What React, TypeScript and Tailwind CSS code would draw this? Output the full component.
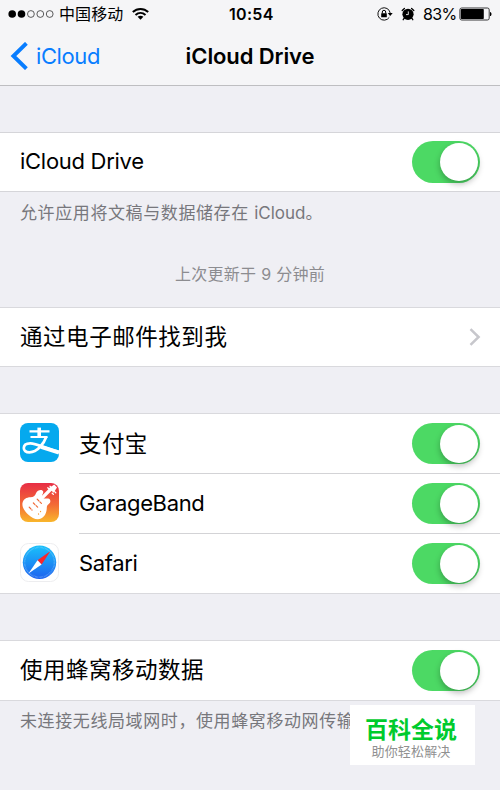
import type { ReactNode } from "react";

const cjk = "font-['Inter','Noto_Sans_CJK_SC',sans-serif]";

function Switch() {
  return (
    <div className="flex h-[41.5px] w-[68px] shrink-0 items-center justify-end rounded-full bg-[#4cd964] pr-[2px]">
      <div className="size-[38px] rounded-full bg-white shadow-[0_3px_6px_rgba(0,0,0,0.28)]" />
    </div>
  );
}

function AlipayIcon() {
  return (
    <svg viewBox="0 0 39 39" className="size-[39px] shrink-0">
      <rect width="39" height="39" rx="8" fill="#05a9ee" />
      <g fill="none" stroke="#fff">
        <path d="M9.5 8.4H29.5M10.5 14H27.5" strokeWidth="2.1" />
        <path d="M19.2 4.6V14" strokeWidth="3.6" />
        <path d="M26.4 13.5C24 20.5 17.5 29.3 9.5 29.3C5.7 29.3 3.8 27.5 3.8 25C3.8 22 6.4 20.3 10.3 20.3C16 20.3 24 24.4 39 29" strokeWidth="2.7" />
        <path d="M21 23.9L39 29.6" strokeWidth="3.8" />
      </g>
    </svg>
  );
}

function GarageBandIcon() {
  return (
    <svg viewBox="0 0 39 39" className="size-[39px] shrink-0">
      <defs>
        <linearGradient id="gb" x1="0" y1="0" x2="0" y2="1">
          <stop stopColor="#e82d45" />
          <stop offset=".55" stopColor="#f36a36" />
          <stop offset="1" stopColor="#f9b62b" />
        </linearGradient>
      </defs>
      <rect width="39" height="39" rx="8" fill="url(#gb)" />
      <path d="M21 16L31.5 5.5" stroke="#fff" strokeWidth="3.2" />
      <path d="M28.8 5.2L34.2 1.5L37 4.4L33.6 9.8Z" fill="#fff" />
      <path d="M30 3.2L31.2 4.4M27.8 4.8L29 6M34.6 8.6L35.8 9.8M32.2 10.2L33.4 11.4" stroke="#fff" strokeWidth="1.3" strokeLinecap="round" />
      <path d="M16 10.2C17.5 6.5 22.6 6 23.2 8.6C23.6 10.6 21.3 12.4 22 14.4C23 17.2 29.2 13.8 30.2 17.2C31.2 20.8 26.8 20.8 26.8 24.6C26.7 29.5 24.8 33.8 21 35.6C17 37.4 12.2 35.4 8.4 31.8C4.6 28.2 1.8 24 2.5 20C3.2 16 6.5 14.3 10.4 14.2C13.6 14.1 15 12.9 16 10.2Z" fill="#fff" />
      <path d="M17.2 16.2L21.4 20.4M13.4 20L17.6 24.2M9.2 24.2L12 27" stroke="#f16b38" strokeWidth="1.2" strokeLinecap="round" strokeDasharray="2.2 1.6" />
      <path d="M20.5 28.5L20.6 28.6M18.5 31L18.6 31.1" stroke="#f49a34" strokeWidth="1.2" strokeLinecap="round" />
    </svg>
  );
}

function SafariIcon() {
  return (
    <svg viewBox="0 0 39 39" className="size-[39px] shrink-0">
      <defs>
        <linearGradient id="sf" x1="0" y1="0" x2="0" y2="1">
          <stop stopColor="#19c1fb" />
          <stop offset="1" stopColor="#1e62ef" />
        </linearGradient>
      </defs>
      <rect x=".5" y=".5" width="38" height="38" rx="8" fill="#fff" stroke="#ededef" />
      <circle cx="19.5" cy="19.3" r="16.7" fill="url(#sf)" />
      <circle cx="19.5" cy="19.3" r="14.9" fill="none" stroke="#a8dcff" strokeWidth="1.6" strokeDasharray=".5 .8" opacity=".55" />
      <path d="M30.5 8L17.5 17.2L21.6 21.4Z" fill="#fb2529" />
      <path d="M17.5 17.2L21.6 21.4L8.5 30.5Z" fill="#fff" />
    </svg>
  );
}

function Status() {
  return (
    <div className="flex h-[28px] items-center pl-[8px] pr-[6px] text-black">
      <svg viewBox="0 0 46 10" className="h-[10px] w-[46px]">
        <circle cx="4.2" cy="5" r="3.8" />
        <circle cx="13.5" cy="5" r="3.8" />
        <g fill="none" stroke="#333" strokeWidth=".8">
          <circle cx="22.9" cy="5" r="3.4" />
          <circle cx="32.3" cy="5" r="3.4" />
          <circle cx="41.7" cy="5" r="3.4" />
        </g>
      </svg>
      <span className="ml-[5px] w-[65px] whitespace-nowrap text-[16px] leading-[26px] tracking-[0.1px]">中国移动</span>
      <svg viewBox="0 0 17 12" className="ml-[8px] h-[12px] w-[17px]">
        <g fill="none" stroke="#000" strokeWidth="2">
          <path d="M.8 4.1C5.2 0 11.8 0 16.2 4.1" />
          <path d="M3.5 7C6.5 4.3 10.5 4.3 13.5 7" />
        </g>
        <path d="M5.6 8.8C7.3 7.4 9.7 7.4 11.4 8.8L8.5 11.8Z" />
      </svg>
      <span className="ml-[80px] w-[46px] whitespace-nowrap text-[16px] font-semibold leading-[26px] tracking-[0.3px]">10:54</span>
      <svg viewBox="0 0 16 14" className="ml-[102px] h-[14px] w-[16px]">
        <path d="M13.2 6A6.2 6.2 0 1 0 12.3 10.3" fill="none" stroke="#111" strokeWidth="1" />
        <path d="M10.8 6H15.7L13.2 9Z" />
        <rect x="4.2" y="6.3" width="5.6" height="4" rx=".5" />
        <path d="M5.3 6.5V5A1.7 1.7 0 0 1 8.7 5V6.5" fill="none" stroke="#000" strokeWidth="1" />
      </svg>
      <svg viewBox="0 0 14 14" className="ml-[8px] h-[14px] w-[14px]">
        <circle cx="7" cy="7.3" r="5.6" />
        <path d="M1.2 3.5L3.4 1.5M10.6 1.5L12.8 3.5M3.2 11.2L2.2 12.7M10.8 11.2L11.8 12.7" stroke="#000" strokeWidth="1.3" strokeLinecap="round" />
        <path d="M7.3 4.4V7.6H5" fill="none" stroke="#f5f5f7" strokeWidth=".9" />
      </svg>
      <span className="ml-[8px] w-[33px] whitespace-nowrap text-[16px] leading-[26px] tracking-[-0.7px]">83%</span>
      <svg viewBox="0 0 33 14" className="ml-[3px] h-[14px] w-[33px] shrink-0">
        <rect x=".9" y="1" width="29.3" height="12" rx="1.8" fill="none" stroke="#222" strokeWidth=".9" />
        <rect x="1.8" y="2" width="23" height="10" rx=".7" />
        <path d="M31 4.9C33 5.4 33 8.6 31 9.1Z" />
      </svg>
    </div>
  );
}

function AppRow({ icon, name, last }: { icon: ReactNode; name: ReactNode; last?: boolean }) {
  return (
    <div className={`flex pl-[20px] ${last ? "h-[59px]" : "h-[60px]"}`}>
      <div className="w-[59px] shrink-0 pt-[9px]">{icon}</div>
      <div className={`flex flex-1 items-center justify-between pr-[20px] ${last ? "" : "border-b border-[#d3d3d6]"}`}>
        {name}
        <Switch />
      </div>
    </div>
  );
}

export default function App() {
  return (
    <div className={`h-[790px] w-[500px] overflow-hidden bg-[#efeff4] text-black ${cjk}`}>
      <header className="h-[86px] border-b border-[#bebec1] bg-[#f5f5f7]">
        <Status />
        <div className="grid h-[56px] grid-cols-[175px_150px_175px] items-center">
          <div className="flex items-center pl-[10px] text-[#087dff]">
            <svg viewBox="0 0 18 28" className="h-[28px] w-[18px]">
              <path d="M16.4 1.3L3.4 14L16.4 26.7" fill="none" stroke="#087dff" strokeWidth="3.9" />
            </svg>
            <span className="ml-[8px] whitespace-nowrap text-[22px] leading-[30px] tracking-[-0.4px]">iCloud</span>
          </div>
          <h1 className="text-center whitespace-nowrap text-[22px] font-semibold leading-[30px] tracking-[-0.1px]">iCloud Drive</h1>
        </div>
      </header>

      <main>
        <section className="mt-[46px] flex h-[60px] items-center justify-between border-y border-[#d5d5d9] bg-white px-[20px]">
          <span className="whitespace-nowrap pb-[2px] text-[22px] leading-[30px] tracking-[-0.28px]">iCloud Drive</span>
          <Switch />
        </section>
        <p className="mt-[8px] h-[26px] whitespace-nowrap pl-[20px] text-[17px] leading-[26px] tracking-[0.6px] text-[#77777c]">允许应用将文稿与数据储存在 <span className="tracking-[0px]">iCloud</span>。</p>
        <p className="mt-[35px] h-[26px] whitespace-nowrap text-center text-[16px] leading-[26px] tracking-[0.3px] text-[#8c8c90]">上次更新于 9 分钟前</p>

        <section className="mt-[20px] flex h-[60px] items-center justify-between border-y border-[#d9d9dd] bg-white pl-[20px] pr-[19px]">
          <span className="whitespace-nowrap text-[22.5px] leading-[34px] tracking-[0.55px]">通过电子邮件找到我</span>
          <svg viewBox="0 0 12 18" className="h-[18px] w-[12px]">
            <path d="M1.5 1.2L9.6 9L1.5 16.8" fill="none" stroke="#c7c7cc" strokeWidth="2.5" />
          </svg>
        </section>

        <section className="mt-[46px] border-y border-[#d9d9dd] bg-white">
          <AppRow icon={<AlipayIcon />} name={<span className="whitespace-nowrap text-[22.5px] leading-[34px] tracking-[0.4px]">支付宝</span>} />
          <AppRow icon={<GarageBandIcon />} name={<span className="whitespace-nowrap pb-[2px] text-[22px] leading-[30px] tracking-[-0.35px]">GarageBand</span>} />
          <AppRow last icon={<SafariIcon />} name={<span className="whitespace-nowrap pb-[2px] text-[22px] leading-[30px] tracking-[-0.35px]">Safari</span>} />
        </section>

        <section className="mt-[46px] flex h-[61px] items-center justify-between border-y border-[#d9d9dd] bg-white px-[20px]">
          <span className="whitespace-nowrap pb-[2px] text-[22.5px] leading-[34px] tracking-[0.5px]">使用蜂窝移动数据</span>
          <Switch />
        </section>
        <div className="relative h-[89px]">
          <p className="whitespace-nowrap pl-[20px] pt-[7px] text-[17px] leading-[26px] tracking-[0.6px] text-[#77777c]">未连接无线局域网时，使用蜂窝移动网传输</p>
          <div className="absolute left-[350px] top-[4px] flex h-[60px] w-[125px] flex-col items-center bg-white pr-[3px] pt-[11px]">
            <span className="whitespace-nowrap text-[23px] font-bold leading-[28px] text-[#00cb2d]">百科全说</span>
            <span className="whitespace-nowrap text-[13px] leading-[15px] tracking-[0.15px] text-[#909090]">助你轻松解决</span>
          </div>
        </div>
      </main>
    </div>
  );
}
